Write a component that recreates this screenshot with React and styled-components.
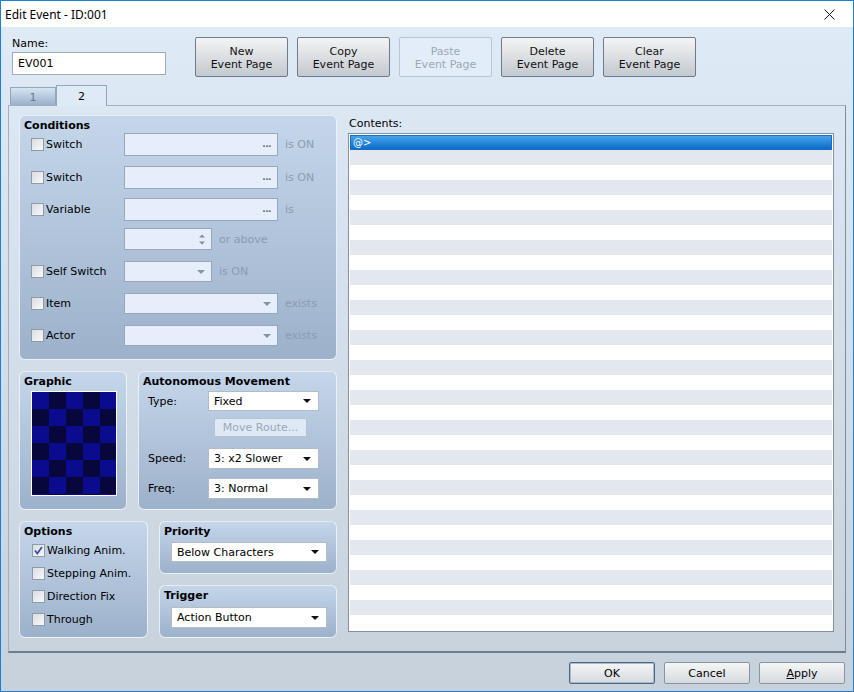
import React from "react"
import styled, { createGlobalStyle } from "styled-components"

const GlobalStyle = createGlobalStyle`
  body {
    margin: 0;
    font-family: "DejaVu Sans", Verdana, sans-serif;
  }
  * { box-sizing: border-box; }
`

const Window = styled.div`
  width: 854px;
  height: 692px;
  border: 1px solid #1c7fd2;
  display: flex;
  flex-direction: column;
  font-size: 11px;
  color: #000;
  overflow: hidden;
`

const TitleBar = styled.div`
  height: 26px;
  flex: none;
  display: flex;
  align-items: center;
  justify-content: space-between;
  padding-left: 4px;
  background: #fff;
  font-family: "Noto Sans", "Open Sans", sans-serif;
  font-size: 12px;
`

const CloseButton = styled.div`
  width: 46px;
  height: 26px;
  display: flex;
  align-items: center;
  justify-content: center;
  padding-right: 2px;
`

const Body = styled.div`
  flex: 1;
  display: flex;
  flex-direction: column;
  padding: 10px 7px 7px;
  background: linear-gradient(#dfeaf7, #c7d1db);
`

const TopBar = styled.div`
  height: 40px;
  display: flex;
  align-items: flex-start;
  padding-left: 4px;
`

const NameBlock = styled.div`
  width: 154px;
  display: flex;
  flex-direction: column;
`

const NameLabel = styled.div`
  height: 15px;
  line-height: 13px;
`

const TextInput = styled.div`
  height: 23px;
  border: 1px solid #a3acb6;
  background: #fff;
  padding-left: 5px;
  display: flex;
  align-items: center;
`

const ButtonRow = styled.div`
  display: flex;
  gap: 9px;
  margin-left: 29px;
`

const PageButton = styled.div`
  width: 93px;
  height: 40px;
  display: flex;
  align-items: center;
  justify-content: center;
  text-align: center;
  line-height: 13px;
  padding-top: 2px;
  border-radius: 2px;
  border: 1px solid ${(p) => (p.$disabled ? "#b7c6d5" : "#6f7b88")};
  background: ${(p) =>
    p.$disabled ? "#e2edf9" : "linear-gradient(#f4f4f4, #c3c9d0)"};
  color: ${(p) => (p.$disabled ? "#9ea8b2" : "#111")};
`

const TabStrip = styled.div`
  height: 20px;
  margin-top: 8px;
  display: flex;
  align-items: flex-end;
  padding-left: 2px;
  position: relative;
  z-index: 1;
`

const Tab = styled.div`
  width: ${(p) => (p.$active ? 51 : 46)}px;
  height: ${(p) => (p.$active ? 21 : 18)}px;
  margin-bottom: ${(p) => (p.$active ? -1 : 0)}px;
  border: 1px solid #93a6ba;
  border-bottom: none;
  display: flex;
  align-items: center;
  justify-content: center;
  padding-top: ${(p) => (p.$active ? 0 : 2)}px;
  background: ${(p) =>
    p.$active ? "#dfeaf7" : "linear-gradient(#d6e4f2, #98b1ca)"};
  color: ${(p) => (p.$active ? "#000" : "#6b7886")};
`

const TabPanel = styled.div`
  height: 548px;
  border: 1px solid #a1b1c2;
  border-right-color: #7d8c9c;
  border-bottom: 2px solid #6f7f90;
  display: flex;
  gap: 11px;
  padding: 9px 0 0 10px;
`

const LeftColumn = styled.div`
  width: 318px;
  display: flex;
  flex-direction: column;
  gap: 11px;
`

const Row = styled.div`
  display: flex;
  gap: 11px;
`

const Stack = styled.div`
  display: flex;
  flex-direction: column;
  gap: 11px;
`

const Group = styled.div`
  width: ${(p) => p.$w}px;
  height: ${(p) => p.$h}px;
  border: 1px solid rgba(240, 246, 252, 0.85);
  border-radius: 6px;
  background: linear-gradient(#c5d6ea, #9cb1ca);
  padding: 3px 0 0 4px;
  display: flex;
  flex-direction: column;
`

const GroupTitle = styled.div`
  font-weight: bold;
  line-height: 14px;
  height: 14px;
`

const CondRows = styled.div`
  display: flex;
  flex-direction: column;
  padding-left: 7px;
`

const CondRow = styled.div`
  height: ${(p) => p.$h}px;
  margin-top: ${(p) => p.$mt}px;
  display: flex;
  align-items: center;
`

const CheckLabel = styled.div`
  width: 93px;
  display: flex;
  align-items: center;
  gap: 2px;
  flex: none;
`

const Box = styled.div`
  width: 13px;
  height: 13px;
  border: 1px solid #8e9ba9;
  background: linear-gradient(135deg, #d9dde2, #f9f9f9);
  display: flex;
  align-items: center;
  justify-content: center;
  flex: none;
`

const Field = styled.div`
  width: ${(p) => p.$w}px;
  height: 100%;
  border: 1px solid #97a8bb;
  background: #e5eefa;
  display: flex;
  align-items: center;
  justify-content: flex-end;
  padding-right: 6px;
  flex: none;
`

const Dots = styled.span`
  color: #5f6d7c;
  font-size: 9px;
  font-weight: bold;
  letter-spacing: -0.5px;
  padding-bottom: 1px;
`

const Suffix = styled.span`
  margin-left: 7px;
  color: #8a9cb1;
`

const Picture = styled.svg`
  margin: 2px 0 0 7px;
  display: block;
`

const FormRow = styled.div`
  display: flex;
  align-items: center;
  margin-top: ${(p) => p.$mt}px;
  padding-left: ${(p) => p.$pl ?? 5}px;
`

const FormLabel = styled.div`
  width: 60px;
  flex: none;
`

const Select = styled.div`
  width: ${(p) => p.$w}px;
  height: ${(p) => p.$h || 21}px;
  border: 1px solid #b3bcc6;
  background: #fff;
  display: flex;
  align-items: center;
  justify-content: space-between;
  padding: 0 7px 0 5px;
  flex: none;
`

const DisabledButton = styled.div`
  width: 93px;
  height: 19px;
  margin-left: 66px;
  border: 1px solid #b5c4d3;
  border-radius: 2px;
  background: #dfe9f6;
  color: #9aa8b6;
  display: flex;
  align-items: center;
  justify-content: center;
`

const OptionRows = styled.div`
  display: flex;
  flex-direction: column;
  padding-left: 8px;
`

const OptionRow = styled.div`
  height: 23px;
  display: flex;
  align-items: center;
  gap: 2px;
`

const RightColumn = styled.div`
  width: 486px;
  display: flex;
  flex-direction: column;
`

const ContentsLabel = styled.div`
  height: 18px;
  line-height: 16px;
  padding-left: 1px;
  padding-top: 1px;
`

const List = styled.div`
  height: 499px;
  border: 1px solid #8291a1;
  background: #fff;
  padding: 1px;
  overflow: hidden;
`

const ListRow = styled.div`
  height: 15px;
  line-height: 13px;
  padding-left: 2px;
  font-size: 10px;
  color: #fff;
  background: ${(p) =>
    p.$selected
      ? "linear-gradient(#46a3ea, #0a6ccb)"
      : p.$odd
      ? "#e2e8ee"
      : "#fff"};
  border: ${(p) => (p.$selected ? "1px solid #1b6cc0" : "none")};
`

const Footer = styled.div`
  margin-top: 9px;
  display: flex;
  justify-content: flex-end;
  gap: 9px;
  padding-right: 1px;
`

const DialogButton = styled.div`
  width: 86px;
  height: 22px;
  border: 1px solid ${(p) => (p.$default ? "#4b6583" : "#8795a3")};
  box-shadow: ${(p) => (p.$default ? "inset 0 0 0 1px #a9bbcd" : "none")};
  border-radius: 2px;
  background: linear-gradient(#f5f5f5, #d5dae0);
  display: flex;
  align-items: center;
  justify-content: center;
`

const Arrow = ({ color = "#111" }) => (
  <svg width="8" height="4" viewBox="0 0 8 4">
    <path d="M0 0h8L4 4z" fill={color} />
  </svg>
)

const Spin = () => (
  <svg width="6" height="11" viewBox="0 0 6 11">
    <path d="M0 3.5L3 0.5 6 3.5z M0 7.5h6L3 10.5z" fill="#8090a0" />
  </svg>
)

const Check = ({ checked }) => (
  <Box>
    {checked && (
      <svg width="9" height="9" viewBox="0 0 9 9">
        <path
          d="M1 4.5l2.3 3L8 1"
          fill="none"
          stroke="#3a4ea6"
          strokeWidth="1.8"
        />
      </svg>
    )}
  </Box>
)

const Checker = () => {
  const cells = []
  for (let r = 0; r < 7; r++) {
    for (let c = 0; c < 6; c++) {
      cells.push(
        <rect
          key={`${r}-${c}`}
          x={1 + c * 17}
          y={1 + r * 17}
          width="17"
          height="17"
          fill={(r + c) % 2 === 0 ? "#0b0b90" : "#07073c"}
        />
      )
    }
  }
  return (
    <Picture width="86" height="105" viewBox="0 0 86 105" shapeRendering="crispEdges">
      <defs>
        <clipPath id="pic">
          <rect x="1" y="1" width="84" height="103" />
        </clipPath>
      </defs>
      <rect width="86" height="105" fill="#fff" />
      <g clipPath="url(#pic)">{cells}</g>
    </Picture>
  )
}

const conditions = [
  { label: "Switch", w: 154, kind: "dots", suffix: "is ON", mt: 0, h: 23 },
  { label: "Switch", w: 154, kind: "dots", suffix: "is ON", mt: 10, h: 23 },
  { label: "Variable", w: 154, kind: "dots", suffix: "is", mt: 9, h: 23 },
  { label: null, w: 88, kind: "spin", suffix: "or above", mt: 7, h: 22 },
  { label: "Self Switch", w: 88, kind: "arrow", suffix: "is ON", mt: 11, h: 21 },
  { label: "Item", w: 154, kind: "arrow", suffix: "exists", mt: 11, h: 21 },
  { label: "Actor", w: 154, kind: "arrow", suffix: "exists", mt: 11, h: 21 },
]

const options = [
  { label: "Walking Anim.", checked: true },
  { label: "Stepping Anim." },
  { label: "Direction Fix" },
  { label: "Through" },
]

export default function App() {
  const rows = Array.from({ length: 33 }, (_, i) => i)

  return (
    <>
      <GlobalStyle />
      <Window>
        <TitleBar>
          <span>Edit Event - ID:001</span>
          <CloseButton>
            <svg width="11" height="11" viewBox="0 0 11 11">
              <path d="M0.5 0.5l10 10M10.5 0.5l-10 10" stroke="#111" strokeWidth="1" />
            </svg>
          </CloseButton>
        </TitleBar>
        <Body>
          <TopBar>
            <NameBlock>
              <NameLabel>Name:</NameLabel>
              <TextInput>EV001</TextInput>
            </NameBlock>
            <ButtonRow>
              <PageButton>New<br />Event Page</PageButton>
              <PageButton>Copy<br />Event Page</PageButton>
              <PageButton $disabled>Paste<br />Event Page</PageButton>
              <PageButton>Delete<br />Event Page</PageButton>
              <PageButton>Clear<br />Event Page</PageButton>
            </ButtonRow>
          </TopBar>

          <TabStrip>
            <Tab>1</Tab>
            <Tab $active>2</Tab>
          </TabStrip>

          <TabPanel>
            <LeftColumn>
              <Group $w={318} $h={245}>
                <GroupTitle>Conditions</GroupTitle>
                <CondRows>
                  {conditions.map((c, i) => (
                    <CondRow key={i} $mt={c.mt} $h={c.h}>
                      <CheckLabel>
                        {c.label && (
                          <>
                            <Check />
                            <span>{c.label}</span>
                          </>
                        )}
                      </CheckLabel>
                      <Field $w={c.w}>
                        {c.kind === "dots" && <Dots>...</Dots>}
                        {c.kind === "arrow" && <Arrow color="#8594a4" />}
                        {c.kind === "spin" && <Spin />}
                      </Field>
                      <Suffix>{c.suffix}</Suffix>
                    </CondRow>
                  ))}
                </CondRows>
              </Group>

              <Row>
                <Group $w={108} $h={139}>
                  <GroupTitle>Graphic</GroupTitle>
                  <Checker />
                </Group>
                <Group $w={199} $h={139}>
                  <GroupTitle>Autonomous Movement</GroupTitle>
                  <FormRow $mt={2}>
                    <FormLabel>Type:</FormLabel>
                    <Select $w={111} $h={20}>
                      Fixed <Arrow />
                    </Select>
                  </FormRow>
                  <FormRow $mt={7}>
                    <DisabledButton>Move Route...</DisabledButton>
                  </FormRow>
                  <FormRow $mt={11}>
                    <FormLabel>Speed:</FormLabel>
                    <Select $w={111}>
                      3: x2 Slower <Arrow />
                    </Select>
                  </FormRow>
                  <FormRow $mt={9}>
                    <FormLabel>Freq:</FormLabel>
                    <Select $w={111}>
                      3: Normal <Arrow />
                    </Select>
                  </FormRow>
                </Group>
              </Row>

              <Row>
                <Group $w={129} $h={117}>
                  <GroupTitle>Options</GroupTitle>
                  <OptionRows>
                    {options.map((o) => (
                      <OptionRow key={o.label}>
                        <Check checked={o.checked} />
                        <span>{o.label}</span>
                      </OptionRow>
                    ))}
                  </OptionRows>
                </Group>
                <Stack>
                  <Group $w={178} $h={53}>
                    <GroupTitle>Priority</GroupTitle>
                    <FormRow $mt={3} $pl={7}>
                      <Select $w={156} $h={20}>
                        Below Characters <Arrow />
                      </Select>
                    </FormRow>
                  </Group>
                  <Group $w={178} $h={53}>
                    <GroupTitle>Trigger</GroupTitle>
                    <FormRow $mt={4} $pl={7}>
                      <Select $w={156}>
                        Action Button <Arrow />
                      </Select>
                    </FormRow>
                  </Group>
                </Stack>
              </Row>
            </LeftColumn>

            <RightColumn>
              <ContentsLabel>Contents:</ContentsLabel>
              <List>
                {rows.map((i) => (
                  <ListRow key={i} $selected={i === 0} $odd={i % 2 === 1}>
                    {i === 0 ? "@>" : ""}
                  </ListRow>
                ))}
              </List>
            </RightColumn>
          </TabPanel>

          <Footer>
            <DialogButton $default>OK</DialogButton>
            <DialogButton>Cancel</DialogButton>
            <DialogButton>
              <span><u>A</u>pply</span>
            </DialogButton>
          </Footer>
        </Body>
      </Window>
    </>
  )
}
